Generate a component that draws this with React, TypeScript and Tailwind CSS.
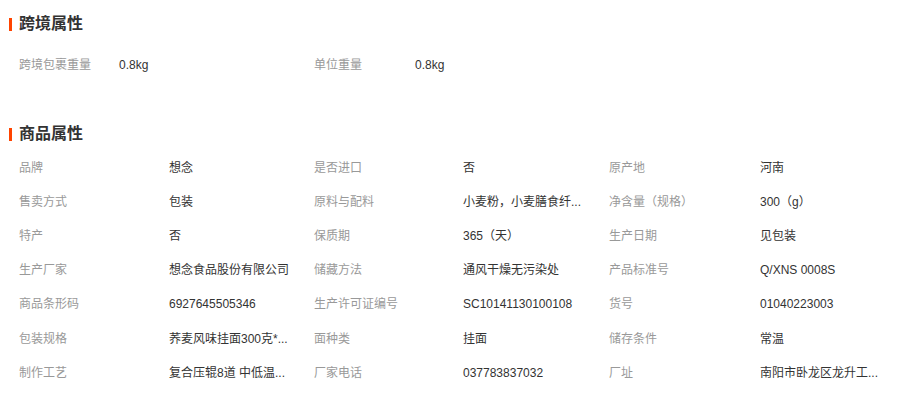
import React from "react";

const font = { fontFamily: '"Liberation Sans", "Noto Sans CJK SC", sans-serif' };

const goods: [string, string][][] = [
  [["品牌", "想念"], ["是否进口", "否"], ["原产地", "河南"]],
  [["售卖方式", "包装"], ["原料与配料", "小麦粉，小麦膳食纤..."], ["净含量（规格）", "300（g）"]],
  [["特产", "否"], ["保质期", "365（天）"], ["生产日期", "见包装"]],
  [["生产厂家", "想念食品股份有限公司"], ["储藏方法", "通风干燥无污染处"], ["产品标准号", "Q/XNS 0008S"]],
  [["商品条形码", "6927645505346"], ["生产许可证编号", "SC10141130100108"], ["货号", "01040223003"]],
  [["包装规格", "荞麦风味挂面300克*..."], ["面种类", "挂面"], ["储存条件", "常温"]],
  [["制作工艺", "复合压辊8道 中低温..."], ["厂家电话", "037783837032"], ["厂址", "南阳市卧龙区龙升工..."]],
];

function Heading({ title }: { title: string }) {
  return (
    <div className="flex items-center h-6 pl-[9px]">
      <div className="w-[3px] h-[13px] bg-[#ff4400]" />
      <div className="ml-[7px] text-[16px] font-bold text-[#333] leading-6">{title}</div>
    </div>
  );
}

export default function App() {
  return (
    <div className="w-[906px] h-[398px] bg-white overflow-hidden text-[12px]" style={font}>
      <div className="pt-[12px]">
        <Heading title="跨境属性" />
        <div className="mt-3 pl-[19px] flex items-center h-[34px]">
          <div className="w-[100px] text-[#999]">跨境包裹重量</div>
          <div className="w-[195px] text-[#333]">0.8kg</div>
          <div className="w-[101px] text-[#999]">单位重量</div>
          <div className="text-[#333]">0.8kg</div>
        </div>
        <div className="mt-10">
          <Heading title="商品属性" />
        </div>
        <div className="mt-[5px] pl-[19px]">
          {goods.map((row, i) => (
            <div key={i} className={`flex items-center ${i === 5 ? "h-[35px]" : "h-[34px]"}`}>
              {row.map(([k, v], j) => (
                <React.Fragment key={j}>
                  <div className={`${j === 2 ? "w-[151px]" : j === 1 ? "w-[149px]" : "w-[150px]"} text-[#999] whitespace-nowrap`}>{k}</div>
                  <div className={`${j === 0 ? "w-[145px]" : "w-[146px]"} text-[#333] whitespace-nowrap`}>{v}</div>
                </React.Fragment>
              ))}
            </div>
          ))}
        </div>
      </div>
    </div>
  );
}
